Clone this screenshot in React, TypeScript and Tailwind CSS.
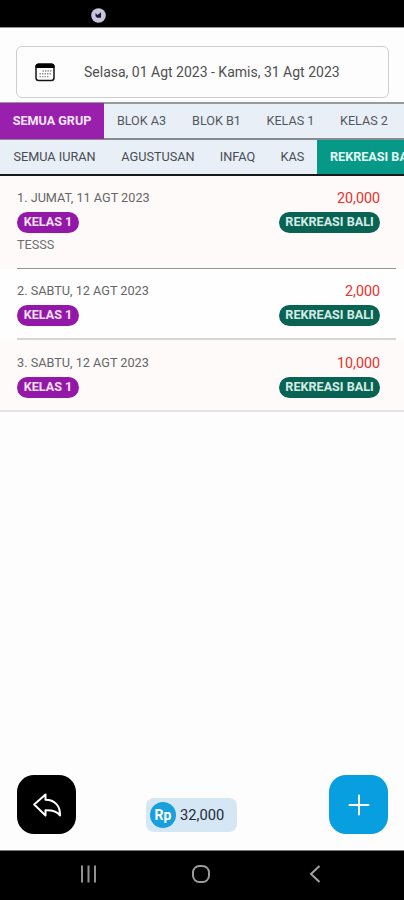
type Tab = { label: string; width: string }

const groups: Tab[] = [
  { label: 'BLOK A3', width: 'w-[75px]' },
  { label: 'BLOK B1', width: 'w-[75px]' },
  { label: 'KELAS 1', width: 'w-[73px]' },
  { label: 'KELAS 2', width: 'w-[74px]' },
]

const dues: Tab[] = [
  { label: 'SEMUA IURAN', width: 'w-[109px]' },
  { label: 'AGUSTUSAN', width: 'w-[98px]' },
  { label: 'INFAQ', width: 'w-[61px]' },
  { label: 'KAS', width: 'w-[49px]' },
]

const entries = [
  { id: 1, date: 'JUMAT, 11 AGT 2023', group: 'KELAS 1', due: 'REKREASI BALI', amount: '20,000', note: 'TESSS' },
  { id: 2, date: 'SABTU, 12 AGT 2023', group: 'KELAS 1', due: 'REKREASI BALI', amount: '2,000', note: '' },
  { id: 3, date: 'SABTU, 12 AGT 2023', group: 'KELAS 1', due: 'REKREASI BALI', amount: '10,000', note: '' },
]

const rowStyles = [
  'h-[93px] bg-[#fefaf9]',
  'h-[71px] bg-[#fefefe]',
  'h-[72px] bg-[#fefaf9] pt-px',
]

const dividerStyles = [
  'ml-[17px] mr-[8px] h-px bg-[#969393]',
  'ml-[17px] mr-[8px] h-[2px] bg-[#d5d5d5]',
  'h-[2px] bg-[#e6e4e4]',
]

function CalendarIcon() {
  return (
    <svg className="h-[19px] w-[20px]" viewBox="0 0 20 19" fill="none">
      <rect x="1" y="1.2" width="18" height="16.4" rx="2.8" fill="#fff" stroke="#151515" strokeWidth="1.5" />
      <path d="M.5 5V3.5a3 3 0 0 1 3-3h13a3 3 0 0 1 3 3V5z" fill="#000" />
      <path d="M7.500 8h9M4.500 10.800h12M4.500 13.600h9" stroke="#8a8a8a" strokeWidth="1.4" strokeDasharray="1.4 1.1" />
    </svg>
  )
}

function StatusBar() {
  return (
    <div className="flex h-[28px] shrink-0 border-b border-[#929292] bg-black pl-[91px] pt-[8px]">
      <svg className="h-[15px] w-[15px]" viewBox="0 0 15 15">
        <circle cx="7.5" cy="7.5" r="7.3" fill="#c6c5db" />
        <path d="M4.500 5 6.500 7l3.500-2.800v5.600H6L4.500 8z" fill="#181a30" />
      </svg>
    </div>
  )
}

function TabItem({ label, width }: Tab) {
  return <div className={`flex shrink-0 items-center justify-center ${width}`}>{label}</div>
}

export default function App() {
  return (
    <div className="flex h-[900px] w-[404px] flex-col overflow-hidden bg-[#fdfdfe] font-[Roboto,sans-serif] text-[#555]">
      <StatusBar />

      <div className="h-[74px] shrink-0 pl-[16px] pt-[18px]">
        <div className="flex h-[52px] w-[373px] items-center rounded-[6px] border border-[#cecece] pl-[18px]">
          <CalendarIcon />
          <span className="ml-[29px] whitespace-nowrap text-[14px] text-[#505050]">
            Selasa, 01 Agt 2023 - Kamis, 31 Agt 2023
          </span>
        </div>
      </div>

      {/* Filters: group, then kind of due */}
      <div className="flex h-[38px] shrink-0 border-y-2 border-[#969a9e] border-b-[#888c90] bg-[#e9eff7] text-[12.6px] text-[#53575d]">
        <div className="-my-px flex w-[104px] shrink-0 items-center justify-center bg-[#9920ad] font-bold text-[#f6e6fa]">
          SEMUA GRUP
        </div>
        {groups.map((tab) => (
          <TabItem key={tab.label} {...tab} />
        ))}
      </div>
      <div className="flex h-[36px] shrink-0 overflow-hidden border-b-2 border-[#15191c] bg-[#e9eff7] text-[12.7px] text-[#484c52]">
        {dues.map((tab) => (
          <TabItem key={tab.label} {...tab} />
        ))}
        <div className="flex w-[110px] shrink-0 items-center whitespace-nowrap bg-[#069987] pl-[13px] text-[12.6px] font-bold text-[#e5f7f3]">
          REKREASI BALI
        </div>
      </div>

      {/* Transactions */}
      <div className="flex-1">
        {entries.map((entry, i) => (
          <div key={entry.id} className={`flex flex-col ${rowStyles[i]}`}>
            <div className="flex flex-1 justify-between pl-[17px] pr-[24px] pt-[13px]">
              <div className="flex flex-col items-start">
                <p className="h-[23px] text-[12.7px] leading-[18px] text-[#666]">
                  {entry.id}. {entry.date}
                </p>
                <span className="flex h-[21px] w-[62px] items-center justify-center rounded-full bg-[#9418a8] text-[12.6px] font-bold text-[#f3e3f6]">
                  {entry.group}
                </span>
                {entry.note && <p className="text-[12.7px] leading-[23px] text-[#707070]">{entry.note}</p>}
              </div>
              <div className="flex flex-col items-end">
                <p className="h-[23px] text-[14.3px] leading-[18px] text-[#ed3029]">{entry.amount}</p>
                <span className="flex h-[21px] w-[101px] items-center justify-center rounded-full bg-[#086353] text-[12.6px] font-bold text-[#d6ebe7]">
                  {entry.due}
                </span>
              </div>
            </div>
            <div className={dividerStyles[i]} />
          </div>
        ))}
      </div>

      <div className="flex h-[75px] shrink-0 items-start justify-between pl-[17px] pr-[16px]">
        <button className="flex h-[59px] w-[59px] items-center justify-center rounded-[17px] bg-black">
          <svg className="h-[26px] w-[30px]" viewBox="0 0 30 26" fill="none" stroke="#fff" strokeWidth="2" strokeLinejoin="round">
            <path d="M2.200 12.500 13.500 2.500v5.300C22.500 7.800 28.300 13.500 28 23.500c-2.300-3.800-6.300-5.500-14.500-5.300v5.300z" />
          </svg>
        </button>
        <div className="mr-[22px] mt-[23px] flex h-[34px] w-[91px] items-center rounded-[8px] bg-[#d5e7f5] pl-[4px]">
          <span className="flex h-[26px] w-[26px] items-center justify-center rounded-full bg-[#18a0dc] text-[14px] font-bold text-white">
            Rp
          </span>
          <span className="ml-[4px] text-[14.7px] text-[#1d2a35]">32,000</span>
        </div>
        <button className="flex h-[59px] w-[59px] items-center justify-center rounded-[17px] bg-[#079fdf]">
          <svg className="h-[22px] w-[22px]" viewBox="0 0 22 22" stroke="#fff" strokeWidth="2" strokeLinecap="round">
            <path d="M11 1.500v19M1.500 11h19" />
          </svg>
        </button>
      </div>

      {/* Android navigation bar */}
      <div className="flex h-[50px] shrink-0 items-center border-t border-[#777] bg-black pb-[3px]">
        <svg className="ml-[80px] h-[18px] w-[17px]" viewBox="0 0 17 18" stroke="#929292" strokeWidth="2">
          <path d="M2 .5v17M8.500.5v17M15 .5v17" />
        </svg>
        <svg className="ml-[94px] h-[20px] w-[20px]" viewBox="0 0 20 20" fill="none" stroke="#9c9c9c" strokeWidth="2">
          <rect x="2" y="2" width="16" height="16" rx="6.5" />
        </svg>
        <svg className="ml-[98px] h-[18px] w-[12px]" viewBox="0 0 12 18" fill="none" stroke="#a2a2a2" strokeWidth="2">
          <path d="M10.500 1 2 9l8.500 8" />
        </svg>
      </div>
    </div>
  )
}
